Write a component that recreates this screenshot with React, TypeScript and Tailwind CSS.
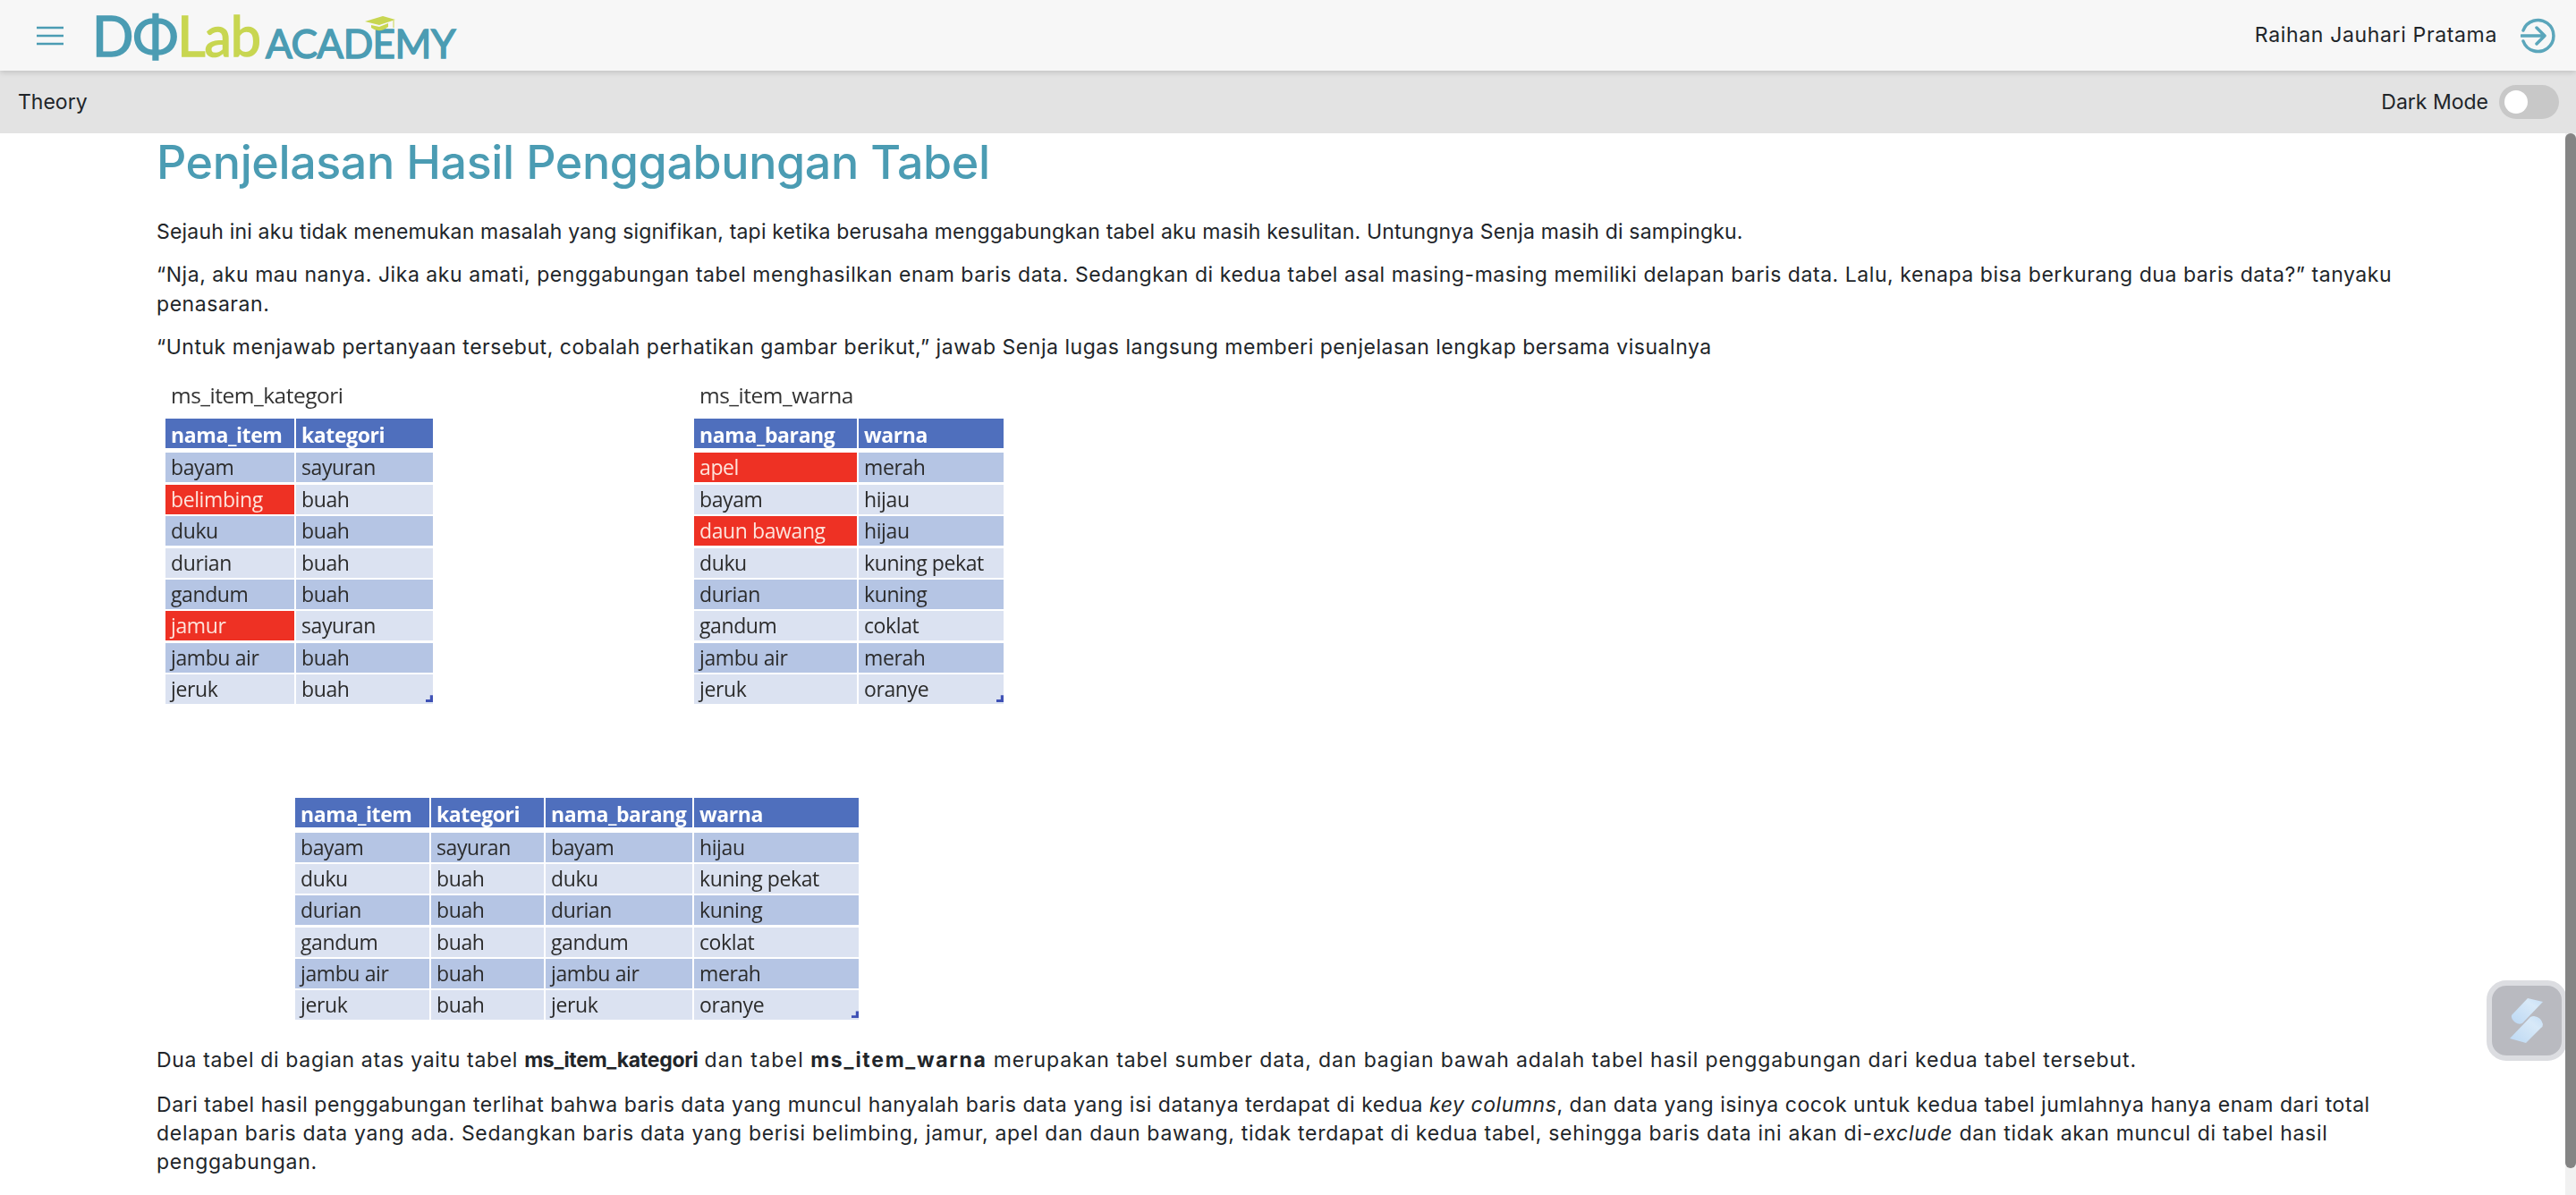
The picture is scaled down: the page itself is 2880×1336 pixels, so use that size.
const font = "[font-family:Inter,'Liberation_Sans',sans-serif]";

type Cell = { text: string; red?: boolean };

const kategori: Cell[][] = [
  [{ text: 'bayam' }, { text: 'sayuran' }],
  [{ text: 'belimbing', red: true }, { text: 'buah' }],
  [{ text: 'duku' }, { text: 'buah' }],
  [{ text: 'durian' }, { text: 'buah' }],
  [{ text: 'gandum' }, { text: 'buah' }],
  [{ text: 'jamur', red: true }, { text: 'sayuran' }],
  [{ text: 'jambu air' }, { text: 'buah' }],
  [{ text: 'jeruk' }, { text: 'buah' }],
];

const warna: Cell[][] = [
  [{ text: 'apel', red: true }, { text: 'merah' }],
  [{ text: 'bayam' }, { text: 'hijau' }],
  [{ text: 'daun bawang', red: true }, { text: 'hijau' }],
  [{ text: 'duku' }, { text: 'kuning pekat' }],
  [{ text: 'durian' }, { text: 'kuning' }],
  [{ text: 'gandum' }, { text: 'coklat' }],
  [{ text: 'jambu air' }, { text: 'merah' }],
  [{ text: 'jeruk' }, { text: 'oranye' }],
];

const hasil: Cell[][] = [
  ['bayam', 'sayuran', 'bayam', 'hijau'],
  ['duku', 'buah', 'duku', 'kuning pekat'],
  ['durian', 'buah', 'durian', 'kuning'],
  ['gandum', 'buah', 'gandum', 'coklat'],
  ['jambu air', 'buah', 'jambu air', 'merah'],
  ['jeruk', 'buah', 'jeruk', 'oranye'],
].map((r) => r.map((text) => ({ text })));

const DataTable = ({ head, rows, cols }: { head: string[]; rows: Cell[][]; cols: string }) => (
  <div className="relative grid w-fit gap-y-[2.4px] font-['Open_Sans','Liberation_Sans',sans-serif] text-[23px] leading-[33px] tracking-[-0.4px] blur-[0.4px]" style={{ gridTemplateColumns: cols }}>
    {head.map((h) => (
      <div key={h} className="mb-[3px] h-[33px] border-r-2 border-white bg-[#4f6fbd] pl-[6px] pt-[2px] font-bold text-white last:border-r-0">
        {h}
      </div>
    ))}
    {rows.map((row, i) =>
      row.map((c, j) => (
        <div
          key={`${i}-${j}`}
          className={`h-[33px] border-r-2 border-white pl-[6px] last:border-r-0 ${
            c.red ? 'bg-[#ee3124] text-[#fde4dc]' : i % 2 === 0 ? 'bg-[#b5c5e4] text-[#2b2b2b]' : 'bg-[#dbe2f1] text-[#2b2b2b]'
          }`}
        >
          {c.text}
        </div>
      )),
    )}
    <div className="absolute bottom-[2px] right-[2px] h-[8px] w-[8px] bg-[#3f51b5] [clip-path:polygon(100%_0,100%_100%,0_100%,0_60%,60%_60%,60%_0)]" />
  </div>
);

const Logo = () => (
  <div className="relative flex items-end">
    <span className="font-['Lato',sans-serif] text-[61px] font-normal leading-[52px] tracking-[-1px] text-[#4b9cb3] [-webkit-text-stroke:1.5px_#4b9cb3]">DΦ</span>
    <span className="font-['Lato',sans-serif] text-[61px] font-normal leading-[52px] tracking-[-1px] text-[#c8d651] [-webkit-text-stroke:1.5px_#c8d651]">Lab</span>
    <span className="ml-[6px] font-['Lato',sans-serif] text-[44px] font-normal leading-[36px] tracking-[-0.5px] text-[#4b9cb3] [-webkit-text-stroke:1.5px_#4b9cb3]">ACADEMY</span>
    <svg className="absolute left-[305px] top-[4px]" width="34" height="17" viewBox="0 0 34 17">
      <path d="M0 6 L20 0 L34 4 L16 10 Z" fill="#c8d651" />
      <path d="M7 10 L16 12 L26 8 L26 12 Q16 20 7 13 Z" fill="#c8d651" />
      <path d="M32 5 V13" stroke="#c8d651" strokeWidth="1" />
    </svg>
  </div>
);

export default function App() {
  return (
    <div className={`flex h-[1336px] w-[2880px] flex-col overflow-hidden bg-white text-[#212529] ${font}`}>
      <header className="z-10 flex h-[79px] shrink-0 items-center justify-between bg-[#f7f7f7] pl-[41px] pr-[22px] shadow-[0_2px_6px_rgba(0,0,0,0.15)]">
        <div className="flex items-center gap-[32px]">
          <svg width="30" height="22" viewBox="0 0 30 22" stroke="#4b9cb3" strokeWidth="2.5">
            <path d="M0 2 H30 M0 11 H30 M0 20 H30" />
          </svg>
          <Logo />
        </div>
        <div className="flex items-center gap-[26px]">
          <span className="text-[23px] tracking-[0.65px]">Raihan Jauhari Pratama</span>
          <svg width="40" height="40" viewBox="0 0 40 40" fill="none" stroke="#5ba6bb" strokeWidth="3.5" strokeLinecap="round" strokeLinejoin="round">
            <path d="M3 14 A 17.5 17.5 0 1 1 3 26" />
            <path d="M1 20 H 26 M 18 11 L 27 20 L 18 29" />
          </svg>
        </div>
      </header>

      <div className="flex h-[70px] shrink-0 items-center justify-between bg-[#e3e3e3] pl-[20px] pr-[19px]">
        <span className="text-[23px]">Theory</span>
        <div className="flex items-center gap-[12px]">
          <span className="text-[23px]">Dark Mode</span>
          <div className="flex h-[38px] w-[67px] items-center rounded-full bg-[#c8c8c8] pl-[6px]">
            <div className="h-[26px] w-[26px] rounded-full bg-white" />
          </div>
        </div>
      </div>

      <main className="relative flex min-h-0 flex-1 overflow-hidden">
        <div className="min-w-0 flex-1 pl-[175px] pr-[186px]">
          <h1 className="mb-[28px] text-[52px] font-medium leading-[66px] tracking-[-0.41px] text-[#4b9cb3]">Penjelasan Hasil Penggabungan Tabel</h1>
          <div className="flex flex-col gap-[15px] text-[23px] leading-[33px]">
            <p className="tracking-[0.19px]">Sejauh ini aku tidak menemukan masalah yang signifikan, tapi ketika berusaha menggabungkan tabel aku masih kesulitan. Untungnya Senja masih di sampingku.</p>
            <p className="tracking-[0.55px]">“Nja, aku mau nanya. Jika aku amati, penggabungan tabel menghasilkan enam baris data. Sedangkan di kedua tabel asal masing-masing memiliki delapan baris data. Lalu, kenapa bisa berkurang dua baris data?” tanyaku penasaran.</p>
            <p className="tracking-[0.53px]">“Untuk menjawab pertanyaan tersebut, cobalah perhatikan gambar berikut,” jawab Senja lugas langsung memberi penjelasan lengkap bersama visualnya</p>
          </div>

          <div className="mt-[21px] flex items-start pl-[10px]">
            <div className="w-[591px]">
              <div className="mb-[11px] pl-[6px] font-['Open_Sans',sans-serif] text-[24.5px] leading-[31px] tracking-[-0.5px] text-[#333] blur-[0.4px]">ms_item_kategori</div>
              <DataTable head={['nama_item', 'kategori']} rows={kategori} cols="146px 155px" />
            </div>
            <div>
              <div className="mb-[11px] pl-[6px] font-['Open_Sans',sans-serif] text-[24.5px] leading-[31px] tracking-[-0.5px] text-[#333] blur-[0.4px]">ms_item_warna</div>
              <DataTable head={['nama_barang', 'warna']} rows={warna} cols="184px 164px" />
            </div>
          </div>

          <div className="ml-[155px] mt-[105px]">
            <DataTable head={['nama_item', 'kategori', 'nama_barang', 'warna']} rows={hasil} cols="152px 128px 166px 186px" />
          </div>

          <div className="mt-[29px] flex flex-col gap-[18px] text-[23px] leading-[32px]">
            <p className="tracking-[0.66px]">Dua tabel di bagian atas yaitu tabel <b className="tracking-[-0.3px]">ms_item_kategori</b> <span className="tracking-[1.2px]">dan tabel</span> <b className="tracking-[1.7px]">ms_item_warna</b> <span className="tracking-[0.88px]">merupakan tabel sumber data, dan bagian bawah adalah tabel hasil penggabungan dari kedua tabel tersebut.</span></p>
            <p className="tracking-[0.55px]">Dari tabel hasil penggabungan terlihat bahwa baris data yang muncul hanyalah baris data yang isi datanya terdapat di kedua <i>key columns</i>, dan data yang isinya cocok untuk kedua tabel jumlahnya hanya enam dari total <span className="tracking-[0.7px]">delapan baris data yang ada. Sedangkan baris data yang berisi belimbing, jamur, apel dan daun bawang, tidak terdapat di kedua tabel, sehingga baris data ini akan di-<i>exclude</i> dan tidak akan muncul di tabel hasil penggabungan.</span></p>
          </div>
        </div>

        <div className="relative z-10 w-[12px] shrink-0 bg-[#f1f1f1]">
          <div className="h-[1157px] w-[12px] rounded-full bg-[#848484]" />
        </div>

        <div className="absolute right-[10px] top-[947px] flex h-[90px] w-[90px] items-center justify-center rounded-[22px] border-[6px] border-[#dcdde1] bg-[#b9bac0]">
          <svg width="38" height="50" viewBox="0 0 38 50">
            <defs>
              <linearGradient id="blade" x1="0" y1="1" x2="1" y2="0">
                <stop offset="0" stopColor="#bcd8f3" />
                <stop offset="0.7" stopColor="#d8e9f8" />
                <stop offset="1" stopColor="#c6dff6" />
              </linearGradient>
            </defs>
            <path d="M20 0 L37 4 L14 28 Q10 30 6 27 Q1 23 2 19 Z" fill="url(#blade)" />
            <path d="M27 20 Q35 21 37 29 Q37 32 35 33 L18 50 L0 45 L23 21 Q25 20 27 20 Z" fill="url(#blade)" />
          </svg>
        </div>
      </main>
    </div>
  );
}
